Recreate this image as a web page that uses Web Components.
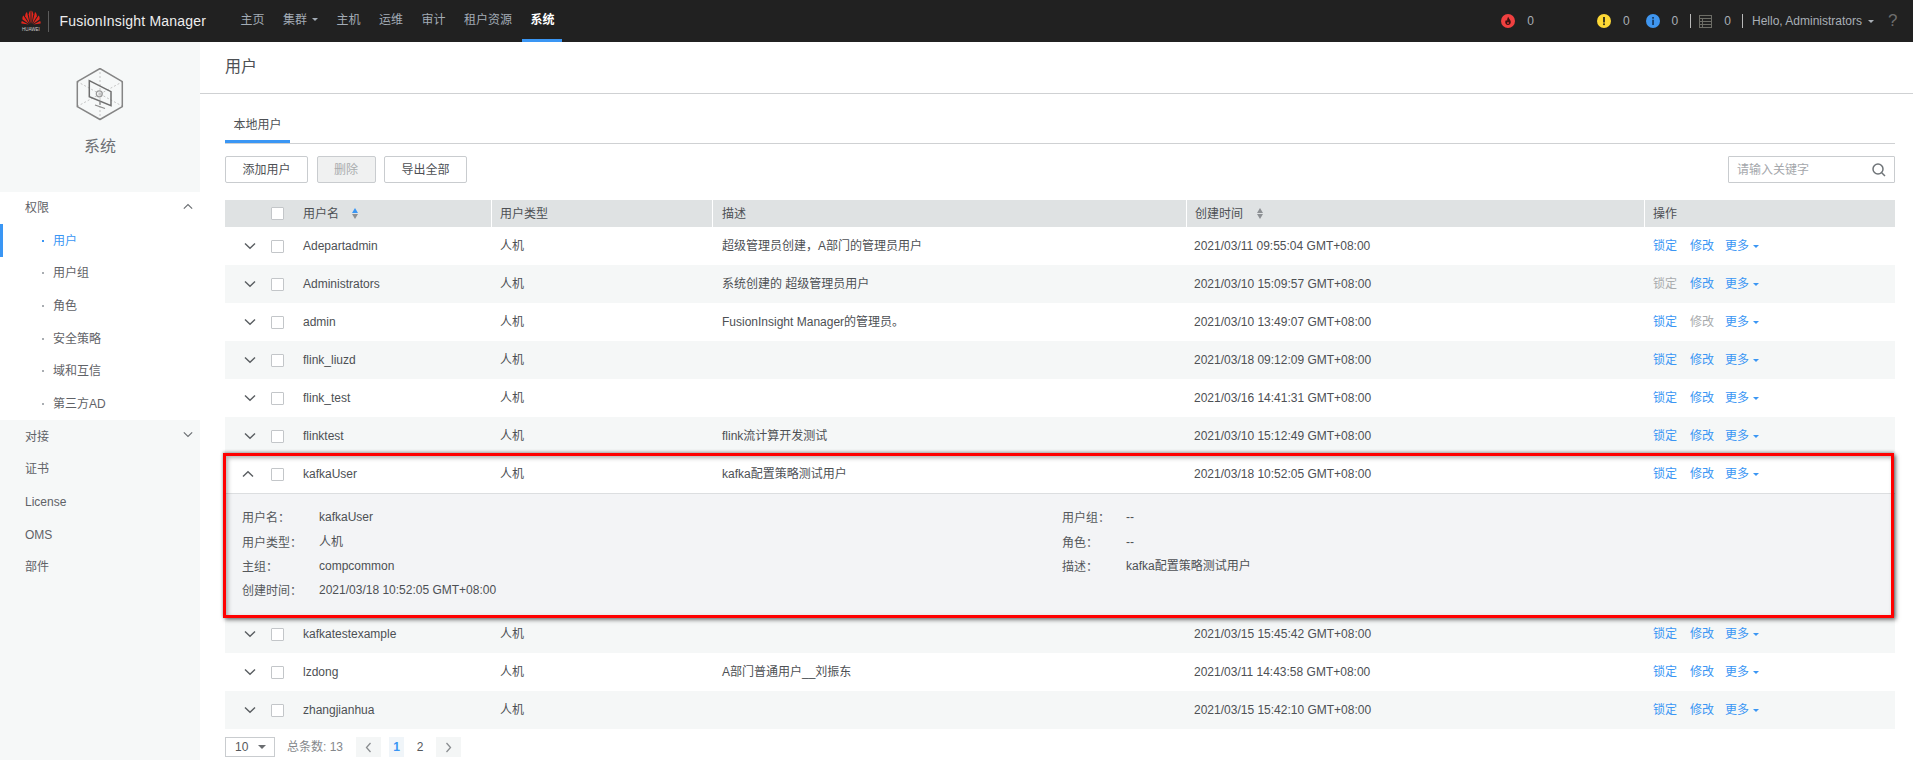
<!DOCTYPE html>
<html lang="zh">
<head>
<meta charset="utf-8">
<title>FusionInsight Manager</title>
<style>
  html, body { margin: 0; padding: 0; height: 760px; overflow: hidden; background: #fff; }
  body { font: 12px/14px "Liberation Sans", "Noto Sans CJK SC", sans-serif; color: #4d5054; }
  fi-app { display: block; width: 1913px; height: 760px; }
</style>
</head>
<body>
<fi-app></fi-app>
<script>
const FONT = '"Liberation Sans", "Noto Sans CJK SC", sans-serif';
function def(name, css, html, setup) {
  customElements.define(name, class extends HTMLElement {
    connectedCallback() {
      if (this.shadowRoot) return;
      const root = this.attachShadow({ mode: 'open' });
      const body = typeof html === 'function' ? html(this) : html;
      root.innerHTML = `<style>${css}</style>${body}`;
      if (setup) setup(this, root);
    }
  });
}
const attr = (el, n, d = '') => el.hasAttribute(n) ? el.getAttribute(n) : d;
const chevron = up => `<svg width="12" height="8" viewBox="0 0 12 8" fill="none" stroke="currentColor" stroke-width="1.4"><path d="${up ? 'M1 6.500 6 1.700l5 4.800' : 'M1 1.500 6 6.300l5-4.800'}"/></svg>`;

def('fi-logo', `
  :host { display: flex; align-items: center; height: 42px; padding-left: 21px; flex: none; }
  .mark { display: flex; flex-direction: column; align-items: center; width: 20px; }
  .mark span { font: 5px/6px "Liberation Sans", sans-serif; color: #cfcfcf; transform: scaleX(.9); white-space: nowrap; margin-top: 1px; }
  .div { width: 1px; height: 21px; background: #5c5c5c; margin: 0 10.500px 0 7px; }
  .name { font: 14px "Liberation Sans", sans-serif; color: #eeeeee; white-space: nowrap; letter-spacing: .2px; }
`, `
  <div class="mark">
    <svg width="20" height="15" viewBox="0 0 20 15">
      <g fill="#e3261d">
        <path d="M9.500 14 7.700 4.200C7.900 2.400 8.900 1 9.500 .5Z"/>
        <path d="M10.500 14 12.300 4.200C12.100 2.400 11.100 1 10.500 .5Z"/>
        <path d="M8.800 14 4.200 6.200C4 4 5.200 2.400 6 2Z"/>
        <path d="M11.200 14 15.800 6.200C16 4 14.800 2.400 14 2Z"/>
        <path d="M8 14 1.500 9.400C1.100 7.800 1.800 6.200 2.400 5.600Z"/>
        <path d="M12 14 18.500 9.400C18.900 7.800 18.200 6.200 17.600 5.600Z"/>
        <path d="M7.600 14.400 .4 13.400C.2 12.600 .5 11.600 .9 11Z"/>
        <path d="M12.400 14.400 19.600 13.400C19.800 12.600 19.500 11.600 19.100 11Z"/>
      </g>
    </svg>
    <span>HUAWEI</span>
  </div>
  <div class="div"></div>
  <div class="name">FusionInsight Manager</div>
`);

def('fi-nav-item', `
  :host { display: flex; align-items: center; height: 42px; box-sizing: border-box; padding: 0 9.250px; color: #a3acb6; font-size: 12px; white-space: nowrap; border-bottom: 3px solid transparent; }
  :host([active]) { color: #fff; font-weight: 700; border-bottom-color: #3a96f4; padding: 0 8px; margin-left: 1.250px; }
  i { display: inline-block; width: 0; height: 0; border: 3.500px solid transparent; border-top: 3.500px solid #a3acb6; border-bottom: 0; margin-left: 5px; }
`, el => `<slot></slot>${el.hasAttribute('caret') ? '<i></i>' : ''}`);

def('fi-status', `
  :host { display: flex; align-items: center; height: 42px; color: #a9afb6; font-size: 12px; white-space: nowrap; flex: none; }
  b { font-weight: 400; margin-left: 12px; }
`, el => `<slot name="icon"></slot><b>${attr(el, 'count', '0')}</b>`);

def('fi-header', `
  :host { display: flex; height: 42px; background: #212121; flex: none; align-items: center; }
  nav { display: flex; margin-left: 25px; }
  .right { margin-left: auto; display: flex; align-items: center; height: 42px; color: #a9afb6; white-space: nowrap; }
  .sep { width: 1px; height: 14px; background: #b9b9b9; }
  .hello { margin-left: 9px; font-size: 12px; }
  .hello i { display: inline-block; width: 0; height: 0; border: 3.500px solid transparent; border-top: 3.500px solid #a9afb6; border-bottom: 0; margin-left: 6px; vertical-align: 2px; }
  .q { font-size: 17px; color: #6d6d6d; margin: 0 15.500px 0 14px; }
  svg { display: block; }
`, `
  <fi-logo></fi-logo>
  <nav>
    <fi-nav-item>主页</fi-nav-item>
    <fi-nav-item caret>集群</fi-nav-item>
    <fi-nav-item>主机</fi-nav-item>
    <fi-nav-item>运维</fi-nav-item>
    <fi-nav-item>审计</fi-nav-item>
    <fi-nav-item>租户资源</fi-nav-item>
    <fi-nav-item active>系统</fi-nav-item>
  </nav>
  <div class="right">
    <fi-status count="0">
      <svg slot="icon" width="14" height="14" viewBox="0 0 14 14"><circle cx="7" cy="7" r="7" fill="#f04040"/><path d="M7.200 2.800C7.600 4.600 9.800 5.600 9.800 8 9.800 9.900 8.500 11 7 11S4.200 9.900 4.200 8.100C4.200 7 4.800 6.200 5.300 5.700 5.400 6.500 5.700 6.900 6.100 7 6.100 5.500 6.400 3.900 7.200 2.800ZM7 7.800C6.500 8.400 6.100 8.800 6.100 9.300 6.100 9.800 6.500 10.100 7 10.100S7.900 9.800 7.900 9.300C7.900 8.800 7.500 8.400 7 7.800Z" fill="#3a1010" fill-rule="evenodd"/></svg>
    </fi-status>
    <fi-status count="0" style="margin-left:63px">
      <svg slot="icon" width="14" height="14" viewBox="0 0 14 14"><circle cx="7" cy="7" r="7" fill="#fdd835"/><rect x="6.100" y="3" width="1.800" height="5.500" fill="#2b2b1a"/><rect x="6.100" y="9.400" width="1.800" height="1.700" fill="#2b2b1a"/></svg>
    </fi-status>
    <fi-status count="0" style="margin-left:16px">
      <svg slot="icon" width="14" height="14" viewBox="0 0 14 14"><circle cx="7" cy="7" r="7" fill="#3f96f0"/><rect x="6.200" y="3" width="1.700" height="1.700" fill="#16375c"/><rect x="6.200" y="5.700" width="1.700" height="5.300" fill="#16375c"/></svg>
    </fi-status>
    <span class="sep" style="margin:0 8px 0 12px"></span>
    <fi-status count="0">
      <svg slot="icon" width="13" height="13" viewBox="0 0 13 13" fill="none" stroke="#6d6d66" stroke-width="1"><rect x=".5" y=".5" width="12" height="12"/><path d="M.5 3.500h12M.5 6.500h12M.5 9.500h12M3.500 3.500v9" /></svg>
    </fi-status>
    <span class="sep" style="margin-left:11px"></span>
    <span class="hello">Hello, Administrators<i></i></span>
    <span class="q">?</span>
  </div>
`);

def('fi-side-item', `
  :host { display: flex; align-items: center; height: 32.700px; box-sizing: border-box; padding-left: 25px; color: #5f6267; font-size: 12px; position: relative; }
  :host([sub]) { padding-left: 53px; background: #fff; }
  :host([open]) { background: #fff; }
  :host([active]) { color: #3a96f4; }
  :host([active])::before { content: ""; position: absolute; left: 0; top: 0; bottom: 0; width: 3px; background: #3a96f4; }
  .dot { position: absolute; left: 42px; top: 50%; width: 2px; height: 2px; margin-top: -1px; background: #a9adb2; }
  :host([active]) .dot { background: #3a96f4; }
  .ch { position: absolute; left: 183px; top: 11px; color: #6b6f73; line-height: 0; }
  svg { width: 10px; height: 7px; }
`, el => `${el.hasAttribute('sub') ? '<span class="dot"></span>' : ''}<slot></slot>${el.hasAttribute('chev') ? `<span class="ch">${chevron(el.getAttribute('chev') === 'up')}</span>` : ''}`);

def('fi-sidebar', `
  :host { display: block; width: 200px; flex: none; background: #f6f8f8; height: 718px; }
  .top { height: 148px; display: flex; flex-direction: column; align-items: center; color: #6d7074; }
  .top svg { margin-top: 26px; display: block; }
  .top div { font-size: 16px; margin-top: 13px; line-height: 24px; }
  .list { padding-top: 1.500px; }
`, `
  <div class="top">
    <svg width="48" height="54" viewBox="0 0 48 54" fill="none">
      <path d="M24 26V1M24 26 2 14M24 26l22-12M24 26v25M24 26 2 38M24 26l22 12" stroke="#c4c4c4" stroke-width="1" stroke-dasharray="2 2"/>
      <path d="M24 .5 46.300 13.700v25L24 51.500 1.300 38.700v-25Z" stroke="#858585" stroke-width="1.500" stroke-linejoin="round"/>
      <path d="M13.300 12.700 35 23.700v14l-21.700-9Z" stroke="#6f6f6f" stroke-width="1.500"/>
      <circle cx="23.300" cy="25.800" r="3" stroke="#999" stroke-width="1.200"/>
      <path d="M24 33.500v3.500M19 37l10 3.500" stroke="#8a8a8a" stroke-width="1.300"/>
    </svg>
    <div>系统</div>
  </div>
  <div class="list">
    <fi-side-item open chev="up">权限</fi-side-item>
    <fi-side-item sub active>用户</fi-side-item>
    <fi-side-item sub>用户组</fi-side-item>
    <fi-side-item sub>角色</fi-side-item>
    <fi-side-item sub>安全策略</fi-side-item>
    <fi-side-item sub>域和互信</fi-side-item>
    <fi-side-item sub>第三方AD</fi-side-item>
    <fi-side-item chev="down">对接</fi-side-item>
    <fi-side-item>证书</fi-side-item>
    <fi-side-item>License</fi-side-item>
    <fi-side-item>OMS</fi-side-item>
    <fi-side-item>部件</fi-side-item>
  </div>
`);

def('fi-button', `
  :host { display: inline-flex; align-items: center; justify-content: center; box-sizing: border-box; height: 27px; width: 83px; background: #fff; border: 1px solid #c9cccf; border-radius: 2px; font-size: 12px; color: #4d5054; flex: none; }
  :host([disabled]) { width: 59px; background: #f0f1f1; color: #a9acae; }
`, `<slot></slot>`);

def('fi-search', `
  :host { display: flex; align-items: center; box-sizing: border-box; width: 167px; height: 27px; border: 1px solid #c9cccf; background: #fff; border-radius: 1px; padding: 0 8px 0 8px; margin-left: auto; color: #a4a7ab; font-size: 12px; }
  span { flex: 1; }
  svg { display: block; }
`, `<span>请输入关键字</span><svg width="14" height="14" viewBox="0 0 14 14" fill="none" stroke="#6f7478" stroke-width="1.500"><circle cx="6" cy="6" r="5"/><path d="m9.700 9.700 3.300 3.300"/></svg>`);

def('fi-check', `
  :host { display: block; width: 13px; height: 13px; box-sizing: border-box; border: 1px solid #c3c6c9; background: #fff; border-radius: 1px; flex: none; }
`, ``);

def('fi-sort', `
  :host { display: inline-flex; flex-direction: column; gap: 1px; }
  i { width: 0; height: 0; border: 3.500px solid transparent; display: block; }
  .u { border-top: 0; border-bottom: 5px solid #8d9094; }
  .d { border-bottom: 0; border-top: 5px solid #8d9094; }
  :host([asc]) .u { border-bottom-color: #3a96f4; }
`, `<i class="u"></i><i class="d"></i>`);

const COLS = '266px 221px 474px 458px 251px';
def('fi-thead', `
  :host { display: grid; grid-template-columns: ${COLS}; height: 27px; background: #dfe2e3; color: #4d5054; font-size: 12px; }
  div { display: flex; align-items: center; padding-left: 8px; border-left: 1px solid #fff; white-space: nowrap; min-width: 0; }
  .first { border-left: 0; padding-left: 46px; }
  fi-check { margin-right: 19px; }
  fi-sort { margin-left: 13px; }
  .t fi-sort { margin-left: 14px; }
`, `
  <div class="first"><fi-check></fi-check>用户名<fi-sort asc></fi-sort></div>
  <div>用户类型</div>
  <div style="padding-left:9px">描述</div>
  <div class="t">创建时间<fi-sort></fi-sort></div>
  <div>操作</div>
`);

def('fi-detail', `
  :host { display: grid; grid-template-columns: 820px 1fr; background: #f3f4f6; border-top: 1px solid #dcdee0; height: 122px; box-sizing: border-box; padding: 10px 0 0 17px; font-size: 12px; color: #55585c; }
  dl { margin: 0; display: grid; grid-template-columns: 77px 1fr; grid-template-rows: 25px 25px 23.500px 25px; align-items: center; }
  .b { grid-template-columns: 64px 1fr; }
  dd { margin: 0; color: #4d5054; }
  dt { margin-top: 2px; }
`, `
  <dl>
    <dt>用户名：</dt><dd>kafkaUser</dd>
    <dt>用户类型：</dt><dd>人机</dd>
    <dt>主组：</dt><dd>compcommon</dd>
    <dt>创建时间：</dt><dd>2021/03/18 10:52:05 GMT+08:00</dd>
  </dl>
  <dl class="b">
    <dt>用户组：</dt><dd>--</dd>
    <dt>角色：</dt><dd>--</dd>
    <dt>描述：</dt><dd>kafka配置策略测试用户</dd>
  </dl>
`);

def('fi-row', `
  :host { display: block; position: relative; background: #fff; font-size: 12px; color: #4d5054; }
  :host([alt]) { background: #f5f7f7; }
  :host([open]) { z-index: 2; }
  .r { display: grid; grid-template-columns: ${COLS}; height: 38px; align-items: center; }
  .r > div { white-space: nowrap; padding-left: 9px; }
  .n { display: flex; align-items: center; padding-left: 18.500px !important; }
  .ch { color: #5a5e62; width: 27.500px; line-height: 0; }
  .ch svg { display: block; }
  .ch.up svg { margin-left: -2px; }
  fi-check { margin-right: 19px; margin-top: 1px; }
  .ops { display: flex; align-items: center; }
  .ops a { color: #3a96f4; margin-right: 13px; }
  .ops a + a { margin-right: 11px; }
  .ops a:last-of-type { margin-right: 4px; }
  .ops i { display: inline-block; width: 0; height: 0; border: 3px solid transparent; border-top: 3.500px solid #3a96f4; border-bottom: 0; }
  .ops a.off { color: #a9acae; }
  .d { padding-left: 10px !important; }
  .t { padding-left: 8px !important; }
  .mark { position: absolute; left: -2px; right: 1px; top: -2.500px; bottom: -2.500px; border: 3.900px solid #ff0000; box-shadow: 2px 2px 4px rgba(0,0,0,.5), 0 -1px 3px rgba(0,0,0,.3), inset 2px 2px 4px rgba(0,0,0,.3); pointer-events: none; }
`, el => {
  const open = el.hasAttribute('open');
  return `<div class="r">
    <div class="n"><span class="ch ${open ? 'up' : ''}">${chevron(open)}</span><fi-check></fi-check><span>${attr(el, 'name')}</span></div>
    <div>人机</div>
    <div class="d">${attr(el, 'desc')}</div>
    <div class="t">${attr(el, 'time')} GMT+08:00</div>
    <div class="ops"><a class="${el.hasAttribute('nolock') ? 'off' : ''}">锁定</a><a class="${el.hasAttribute('noedit') ? 'off' : ''}">修改</a><a>更多</a><i></i></div>
  </div>${open ? '<fi-detail></fi-detail><div class="mark"></div>' : ''}`;
});

def('fi-pager', `
  :host { display: flex; align-items: center; height: 20px; margin-top: 8px; font-size: 12px; color: #85888c; }
  .sel { box-sizing: border-box; width: 50px; height: 20px; border: 1px solid #c9cccf; display: flex; align-items: center; padding-left: 9px; color: #55585c; position: relative; }
  .sel i { position: absolute; left: 32px; top: 7px; width: 0; height: 0; border: 4px solid transparent; border-top: 4px solid #6a6d70; border-bottom: 0; }
  .tot { margin-left: 12px; width: 69px; white-space: nowrap; }
  .b { box-sizing: border-box; width: 25px; height: 20px; background: #f4f6f6; display: flex; align-items: center; justify-content: center; color: #8a8d90; }
  .p { width: 15px; height: 20px; display: flex; align-items: center; justify-content: center; color: #55585c; }
  .p.on { background: #f0f5f9; color: #3a96f4; font-weight: 700; margin-left: 8px; }
  svg { display: block; }
`, `
  <div class="sel">10<i></i></div>
  <div class="tot">总条数: 13</div>
  <div class="b"><svg width="7" height="11" viewBox="0 0 7 11" fill="none" stroke="currentColor" stroke-width="1.300"><path d="M5.500 1 1.500 5.500l4 4.500"/></svg></div>
  <div class="p on">1</div>
  <div class="p" style="margin-left:8.500px">2</div>
  <div class="b" style="margin-left:8.500px"><svg width="7" height="11" viewBox="0 0 7 11" fill="none" stroke="currentColor" stroke-width="1.300"><path d="M1.500 1l4 4.500-4 4.500"/></svg></div>
`);

const ROWS = [
  ['Adepartadmin', '超级管理员创建，A部门的管理员用户', '2021/03/11 09:55:04'],
  ['Administrators', '系统创建的 超级管理员用户', '2021/03/10 15:09:57', 'nolock'],
  ['admin', 'FusionInsight Manager的管理员。', '2021/03/10 13:49:07', 'noedit'],
  ['flink_liuzd', '', '2021/03/18 09:12:09'],
  ['flink_test', '', '2021/03/16 14:41:31'],
  ['flinktest', 'flink流计算开发测试', '2021/03/10 15:12:49'],
  ['kafkaUser', 'kafka配置策略测试用户', '2021/03/18 10:52:05', 'open'],
  ['kafkatestexample', '', '2021/03/15 15:45:42'],
  ['lzdong', 'A部门普通用户__刘振东', '2021/03/11 14:43:58'],
  ['zhangjianhua', '', '2021/03/15 15:42:10'],
];

def('fi-content', `
  :host { display: block; flex: 1; min-width: 0; background: #fff; color: #4d5054; }
  .title { height: 51px; border-bottom: 1px solid #cfd1d3; padding-left: 25px; font-size: 16px; line-height: 50px; color: #4d5054; }
  .wrap { padding: 0 18px 0 25px; }
  .tabs { height: 49px; border-bottom: 1px solid #cfd1d3; box-sizing: content-box; display: flex; align-items: flex-end; }
  .tab { box-sizing: border-box; width: 65px; height: 33px; border-bottom: 3px solid #3a96f4; text-align: center; line-height: 30px; font-size: 12px; }
  .bar { display: flex; gap: 8.500px; margin: 12px 0 17px; height: 27px; }
`, `
  <div class="title">用户</div>
  <div class="wrap">
    <div class="tabs"><div class="tab">本地用户</div></div>
    <div class="bar">
      <fi-button>添加用户</fi-button>
      <fi-button disabled>删除</fi-button>
      <fi-button>导出全部</fi-button>
      <fi-search></fi-search>
    </div>
    <fi-thead></fi-thead>
    <div id="rows"></div>
    <fi-pager></fi-pager>
  </div>
`, (el, root) => {
  const host = root.getElementById('rows');
  ROWS.forEach((r, i) => {
    const row = document.createElement('fi-row');
    row.setAttribute('name', r[0]);
    row.setAttribute('desc', r[1]);
    row.setAttribute('time', r[2]);
    if (r[3]) row.setAttribute(r[3], '');
    if (i % 2) row.setAttribute('alt', '');
    host.appendChild(row);
  });
});

def('fi-app', `
  :host { display: flex; flex-direction: column; font-family: ${FONT}; }
  main { display: flex; flex: 1; min-height: 0; }
`, `<fi-header></fi-header><main><fi-sidebar></fi-sidebar><fi-content></fi-content></main>`);
</script>
</body>
</html>
